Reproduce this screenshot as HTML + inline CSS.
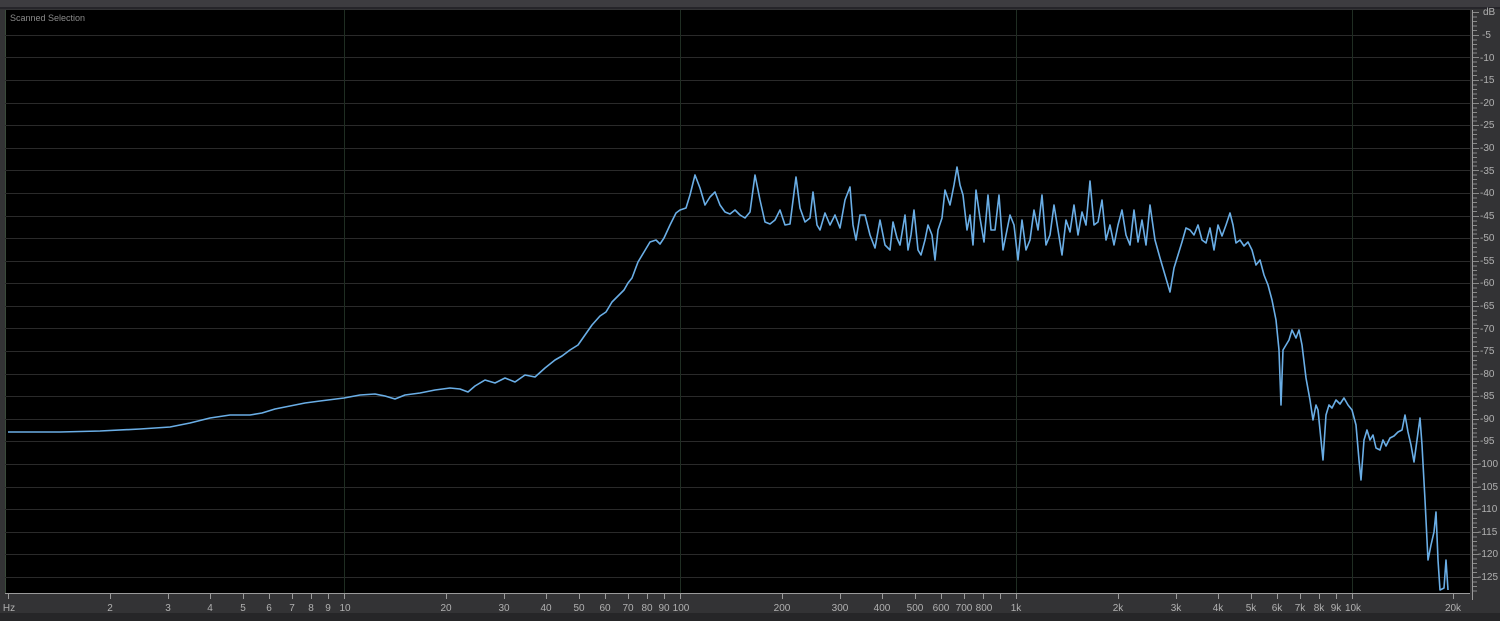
<!DOCTYPE html>
<html><head><meta charset="utf-8"><style>
html,body{margin:0;padding:0;background:#2b2b2b;width:1500px;height:621px;overflow:hidden;font-family:"Liberation Sans",sans-serif}
</style></head><body>
<svg width="1500" height="621" viewBox="0 0 1500 621" xmlns="http://www.w3.org/2000/svg" font-family="Liberation Sans, sans-serif">
<rect width="1500" height="621" fill="#333335"/>
<rect x="0" y="0" width="1500" height="7" fill="#3d3c40"/>
<rect x="0" y="7" width="1500" height="2" fill="#26252a"/>
<rect x="0" y="613" width="1500" height="8" fill="#262628"/>
<rect x="5" y="10" width="1465" height="583" fill="#000"/>
<line x1="5.5" y1="10" x2="5.5" y2="593" stroke="#3a4a3a"/>
<g stroke="#2a2a2a" stroke-width="1">
<line x1="5" x2="1470" y1="35.5" y2="35.5"/><line x1="5" x2="1470" y1="57.5" y2="57.5"/><line x1="5" x2="1470" y1="80.5" y2="80.5"/><line x1="5" x2="1470" y1="103.5" y2="103.5"/><line x1="5" x2="1470" y1="125.5" y2="125.5"/><line x1="5" x2="1470" y1="148.5" y2="148.5"/><line x1="5" x2="1470" y1="170.5" y2="170.5"/><line x1="5" x2="1470" y1="193.5" y2="193.5"/><line x1="5" x2="1470" y1="216.5" y2="216.5"/><line x1="5" x2="1470" y1="238.5" y2="238.5"/><line x1="5" x2="1470" y1="261.5" y2="261.5"/><line x1="5" x2="1470" y1="283.5" y2="283.5"/><line x1="5" x2="1470" y1="306.5" y2="306.5"/><line x1="5" x2="1470" y1="328.5" y2="328.5"/><line x1="5" x2="1470" y1="351.5" y2="351.5"/><line x1="5" x2="1470" y1="374.5" y2="374.5"/><line x1="5" x2="1470" y1="396.5" y2="396.5"/><line x1="5" x2="1470" y1="419.5" y2="419.5"/><line x1="5" x2="1470" y1="441.5" y2="441.5"/><line x1="5" x2="1470" y1="464.5" y2="464.5"/><line x1="5" x2="1470" y1="487.5" y2="487.5"/><line x1="5" x2="1470" y1="509.5" y2="509.5"/><line x1="5" x2="1470" y1="532.5" y2="532.5"/><line x1="5" x2="1470" y1="554.5" y2="554.5"/><line x1="5" x2="1470" y1="577.5" y2="577.5"/>
</g>
<g stroke="#1f2d22" stroke-width="1">
<line x1="344.5" x2="344.5" y1="10" y2="593"/><line x1="680.5" x2="680.5" y1="10" y2="593"/><line x1="1016.5" x2="1016.5" y1="10" y2="593"/><line x1="1352.5" x2="1352.5" y1="10" y2="593"/>
</g>
<text x="10" y="21" font-size="9" fill="#8a8a8a">Scanned Selection</text>
<polyline fill="none" stroke="#6aaee6" stroke-width="1.6" stroke-linejoin="round" points="
8,432 60,432 100,431 140,429 170,427 190,423 210,418 230,415 250,415 262,413 275,409 290,406 305,403 320,401 344,398 360,395 375,394 385,396 395,399 405,395 420,393 435,390 450,388 460,389 468,392 475,386 485,380 495,383 505,378 515,382 525,375 535,377 545,368 555,360 562,356 570,350 578,345 585,335 592,325 600,316 606,312 612,302 618,296 624,290 628,283 632,278 638,262 644,252 650,242 656,240 660,244 664,238 670,225 676,213 680,210 686,208 690,195 695,175 700,188 705,205 710,197 715,192 720,205 725,212 730,214 735,210 740,215 745,218 750,212 755,175 760,200 765,222 770,224 775,220 780,210 785,225 790,224 796,177 800,208 805,222 810,218 813,192 817,225 820,230 825,213 830,225 835,215 840,228 845,200 850,187 853,225 856,240 860,215 865,215 870,235 875,248 880,220 885,245 890,250 893,222 897,238 900,245 905,215 908,250 911,235 914,210 918,250 921,255 925,240 928,225 932,235 935,260 938,230 942,218 945,190 950,205 954,185 957,167 960,185 963,195 967,230 970,215 973,245 976,190 980,218 984,242 988,195 991,230 995,230 999,195 1003,250 1007,230 1010,215 1014,225 1018,260 1022,220 1026,250 1030,240 1034,210 1038,230 1042,195 1046,245 1050,235 1054,205 1058,230 1062,255 1066,220 1070,232 1074,205 1078,235 1082,212 1086,225 1090,181 1094,225 1098,222 1102,200 1106,240 1110,225 1114,245 1118,225 1122,210 1126,235 1130,245 1134,210 1138,242 1142,220 1146,245 1150,205 1155,240 1160,258 1165,275 1170,292 1174,268 1178,255 1182,242 1186,228 1190,230 1194,235 1198,225 1202,240 1206,243 1210,228 1214,250 1218,225 1222,236 1226,225 1230,213 1233,225 1236,243 1240,240 1244,246 1248,242 1252,250 1256,265 1260,260 1264,275 1268,285 1272,300 1276,320 1279,350 1281,405 1283,350 1286,345 1289,340 1292,330 1296,338 1299,330 1302,345 1306,378 1310,400 1313,420 1316,405 1318,410 1321,440 1323,460 1326,415 1329,405 1332,408 1336,400 1340,404 1344,398 1348,405 1352,410 1356,425 1359,460 1361,480 1364,440 1367,430 1370,440 1373,435 1376,448 1380,450 1383,440 1386,446 1390,438 1394,436 1398,432 1402,430 1405,415 1408,432 1411,445 1414,462 1417,440 1420,418 1422,445 1425,500 1428,560 1431,545 1434,532 1436,512 1438,560 1440,590 1444,588 1446,560 1448,590"/>
<!-- right dB axis -->
<g stroke="#9a9a9a" stroke-width="1">
<line x1="1472.5" y1="10" x2="1472.5" y2="600"/>
</g>
<g fill="#b0b0b0" font-size="10" text-anchor="start">
<text x="1483" y="15">dB</text><text x="1482" y="38">-5</text><text x="1480" y="61">-10</text><text x="1480" y="83">-15</text><text x="1480" y="106">-20</text><text x="1480" y="128">-25</text><text x="1480" y="151">-30</text><text x="1480" y="174">-35</text><text x="1480" y="196">-40</text><text x="1480" y="219">-45</text><text x="1480" y="241">-50</text><text x="1480" y="264">-55</text><text x="1480" y="286">-60</text><text x="1480" y="309">-65</text><text x="1480" y="332">-70</text><text x="1480" y="354">-75</text><text x="1480" y="377">-80</text><text x="1480" y="399">-85</text><text x="1480" y="422">-90</text><text x="1480" y="444">-95</text><text x="1478" y="467">-100</text><text x="1478" y="490">-105</text><text x="1478" y="512">-110</text><text x="1478" y="535">-115</text><text x="1478" y="557">-120</text><text x="1478" y="580">-125</text>
</g>
<g stroke="#8a8a8a">
<path d="M1473 12.5h6M1473 17h4M1473 21.5h4M1473 26h4M1473 30.5h4M1473 35.5h6M1473 40h4M1473 44.5h4M1473 49h4M1473 53h4M1473 57.5h6M1473 62h4M1473 66.5h4M1473 71h4M1473 75.5h4M1473 80.5h6M1473 85h4M1473 89.5h4M1473 94h4M1473 98.5h4M1473 103.5h6M1473 108h4M1473 112.5h4M1473 117h4M1473 121h4M1473 125.5h6M1473 130h4M1473 134.5h4M1473 139h4M1473 143.5h4M1473 148.5h6M1473 153h4M1473 157.5h4M1473 162h4M1473 166h4M1473 170.5h6M1473 175h4M1473 179.5h4M1473 184h4M1473 188.5h4M1473 193.5h6M1473 198h4M1473 202.5h4M1473 207h4M1473 211.5h4M1473 216.5h6M1473 221h4M1473 225.5h4M1473 230h4M1473 234h4M1473 238.5h6M1473 243h4M1473 247.5h4M1473 252h4M1473 256.5h4M1473 261.5h6M1473 266h4M1473 270.5h4M1473 275h4M1473 279h4M1473 283.5h6M1473 288h4M1473 292.5h4M1473 297h4M1473 301.5h4M1473 306.5h6M1473 311h4M1473 315.5h4M1473 320h4M1473 324h4M1473 328.5h6M1473 333h4M1473 337.5h4M1473 342h4M1473 346.5h4M1473 351.5h6M1473 356h4M1473 360.5h4M1473 365h4M1473 369h4M1473 374.5h6M1473 379h4M1473 383.5h4M1473 388h4M1473 392h4M1473 396.5h6M1473 401h4M1473 405.5h4M1473 410h4M1473 414.5h4M1473 419.5h6M1473 424h4M1473 428.5h4M1473 433h4M1473 437h4M1473 441.5h6M1473 446h4M1473 450.5h4M1473 455h4M1473 459.5h4M1473 464.5h6M1473 469h4M1473 473.5h4M1473 478h4M1473 482h4M1473 487.5h6M1473 492h4M1473 496.5h4M1473 501h4M1473 505h4M1473 509.5h6M1473 514h4M1473 518.5h4M1473 523h4M1473 527.5h4M1473 532.5h6M1473 537h4M1473 541.5h4M1473 546h4M1473 550h4M1473 554.5h6M1473 559h4M1473 563.5h4M1473 568h4M1473 572.5h4M1473 577.5h6M1473 582h4M1473 586.5h4M1473 591h4"/>
</g>
<!-- bottom axis -->
<line x1="5" y1="593.5" x2="1470" y2="593.5" stroke="#9a9a9a"/>
<g stroke="#9a9a9a">
<path d="M8.5 594v5M110.5 594v5M168.5 594v5M210.5 594v5M243.5 594v5M269.5 594v5M292.5 594v5M311.5 594v5M328.5 594v5M344.5 594v5M446.5 594v5M504.5 594v5M546.5 594v5M579.5 594v5M605.5 594v5M628.5 594v5M647.5 594v5M664.5 594v5M680.5 594v5M782.5 594v5M840.5 594v5M882.5 594v5M915.5 594v5M941.5 594v5M964.5 594v5M983.5 594v5M1000.5 594v5M1016.5 594v5M1118.5 594v5M1176.5 594v5M1218.5 594v5M1251.5 594v5M1277.5 594v5M1300.5 594v5M1319.5 594v5M1336.5 594v5M1352.5 594v5M1453.5 594v5"/>
</g>
<g fill="#b0b0b0" font-size="10" text-anchor="middle">
<text x="9" y="611">Hz</text><text x="110" y="611">2</text><text x="168" y="611">3</text><text x="210" y="611">4</text><text x="243" y="611">5</text><text x="269" y="611">6</text><text x="292" y="611">7</text><text x="311" y="611">8</text><text x="328" y="611">9</text><text x="345" y="611">10</text><text x="446" y="611">20</text><text x="504" y="611">30</text><text x="546" y="611">40</text><text x="579" y="611">50</text><text x="605" y="611">60</text><text x="628" y="611">70</text><text x="647" y="611">80</text><text x="664" y="611">90</text><text x="681" y="611">100</text><text x="782" y="611">200</text><text x="840" y="611">300</text><text x="882" y="611">400</text><text x="915" y="611">500</text><text x="941" y="611">600</text><text x="964" y="611">700</text><text x="984" y="611">800</text><text x="1016" y="611">1k</text><text x="1118" y="611">2k</text><text x="1176" y="611">3k</text><text x="1218" y="611">4k</text><text x="1251" y="611">5k</text><text x="1277" y="611">6k</text><text x="1300" y="611">7k</text><text x="1319" y="611">8k</text><text x="1336" y="611">9k</text><text x="1353" y="611">10k</text><text x="1453" y="611">20k</text>
</g>
</svg>
</body></html>
